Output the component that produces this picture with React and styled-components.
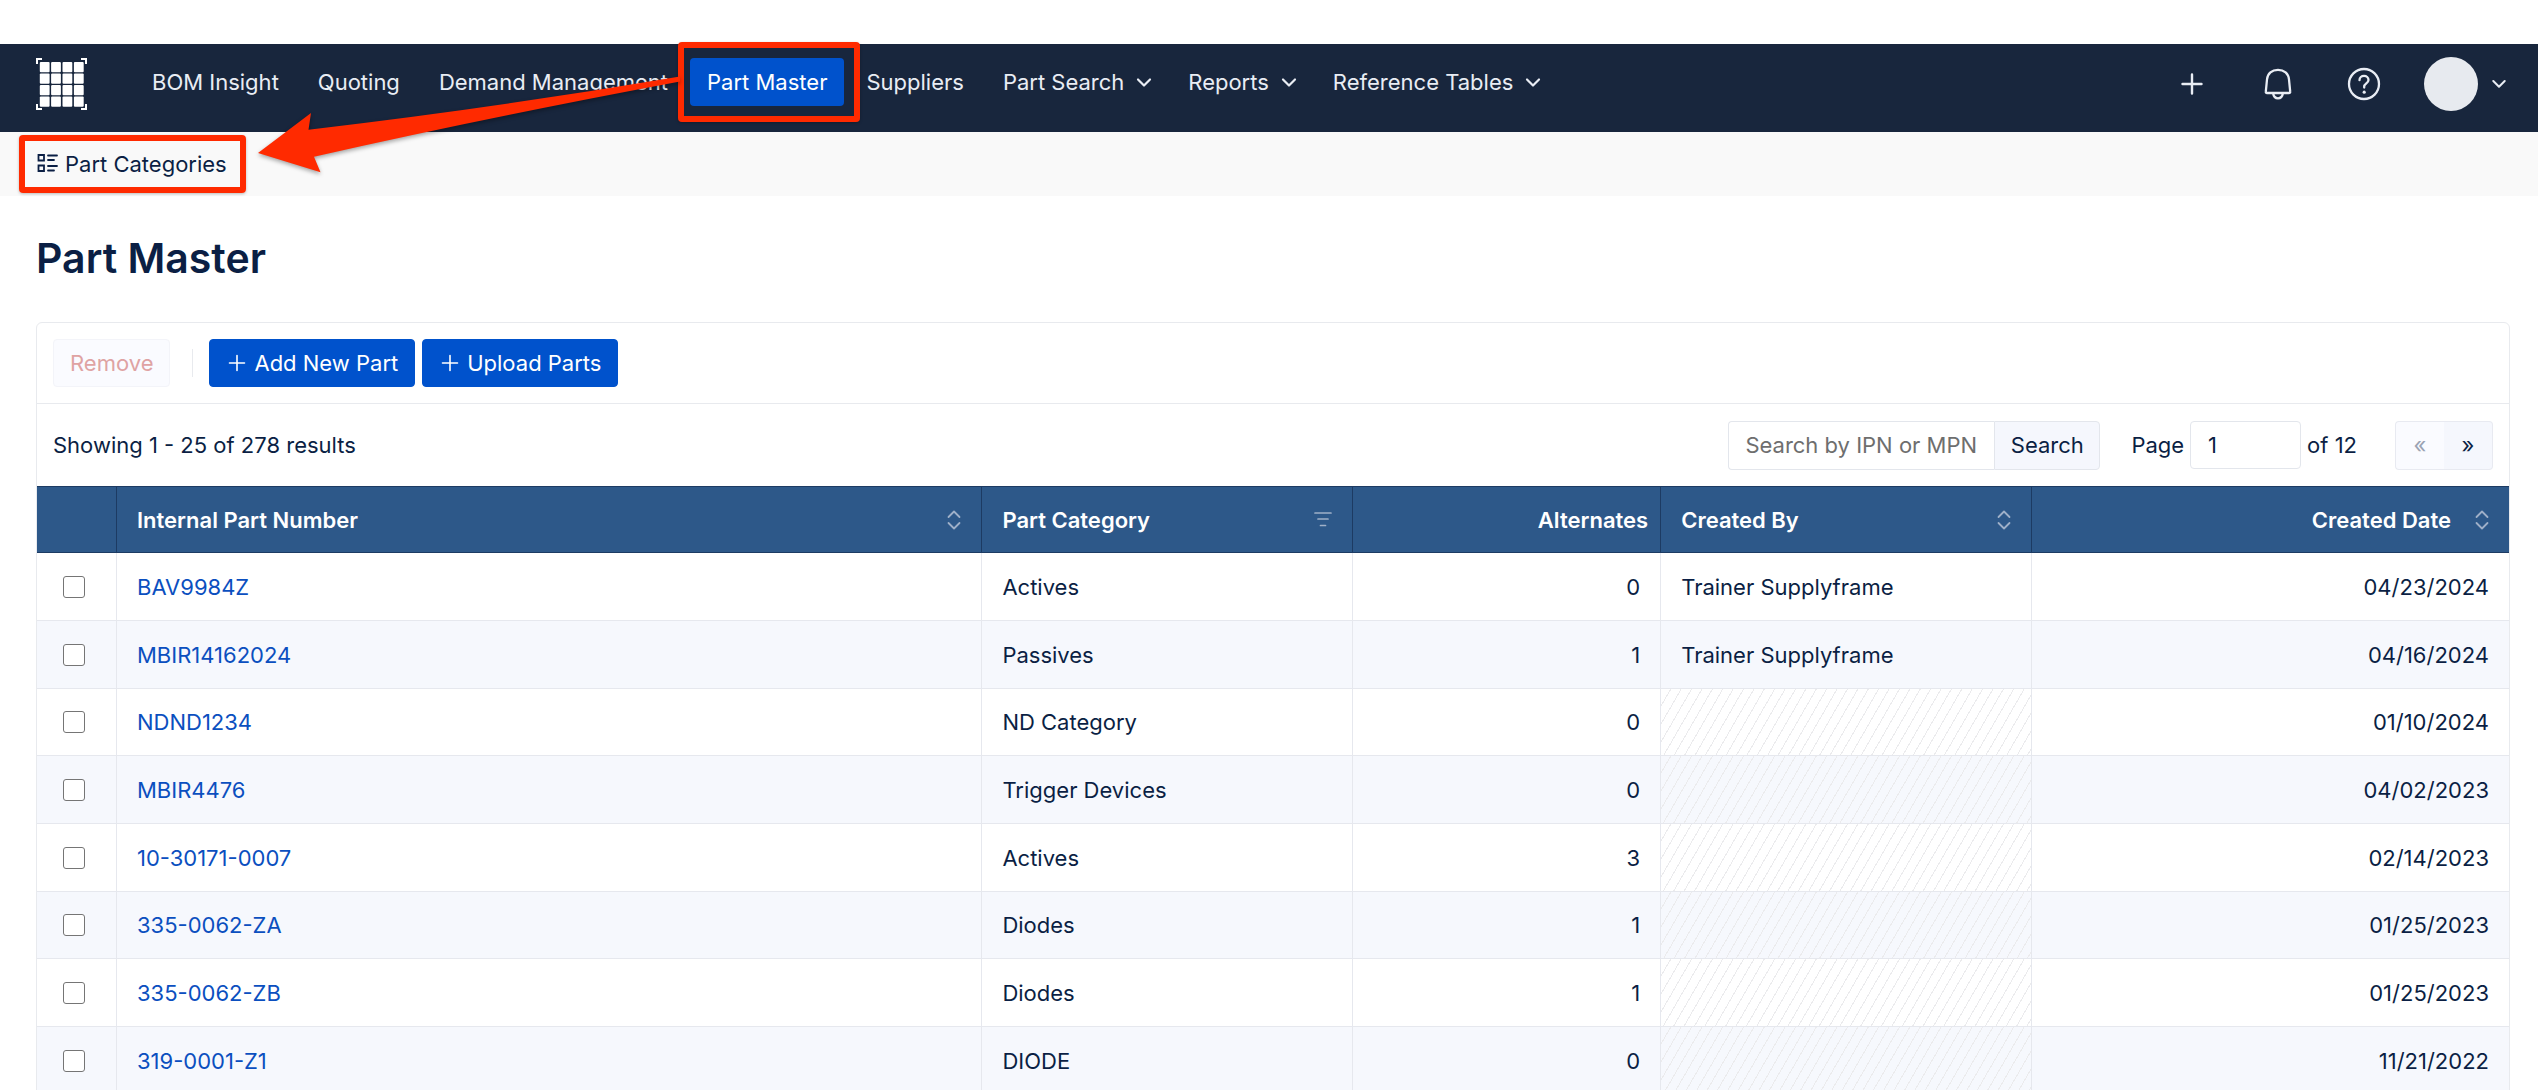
import React from 'react';
import styled, { createGlobalStyle, css } from 'styled-components';

const GlobalStyle = createGlobalStyle`
  *, *::before, *::after { box-sizing: border-box; }
  body {
    margin: 0;
    padding-top: 44px;
    background: #fff;
    color: #0b1f44;
    font: 400 22px/28px Inter, "Liberation Sans", sans-serif;
    overflow-x: hidden;
    scrollbar-width: none;
  }
  button, input { font: inherit; color: inherit; }
  a { color: inherit; text-decoration: none; }
`;

const RED = '#ff2a00';

const Page = styled.div`
  position: relative;
  display: flex;
  flex-direction: column;
`;

const TopBar = styled.header`
  display: flex;
  align-items: center;
  height: 88px;
  padding: 0 32px 8px 36px;
  background: #18263d;
  color: #e9edf4;
`;

const LogoLink = styled.a`
  display: flex;
  margin-right: 48px;
`;

const Nav = styled.nav`
  display: flex;
  align-items: flex-start;
  gap: 5px;
  height: 52px;
`;

const NavItem = styled.a`
  position: relative;
  display: flex;
  align-items: center;
  gap: 12px;
  height: 48px;
  padding: 0 ${(p) => (p.$menu ? '14px' : '17px')} 0 17px;
  border-radius: 4px;
  white-space: nowrap;
  ${(p) => p.$active && css`
    background: #0052cc;
    color: #fff;
  `}
`;

const Actions = styled.div`
  display: flex;
  align-items: center;
  margin-left: auto;
`;

const IconButton = styled.button`
  display: flex;
  align-items: center;
  justify-content: center;
  width: 86px;
  height: 54px;
  padding: 0;
  border: 0;
  background: none;
`;

const AccountButton = styled.button`
  display: flex;
  align-items: center;
  gap: 14px;
  margin-left: 17px;
  padding: 0;
  border: 0;
  background: none;
`;

const Avatar = styled.span`
  width: 54px;
  height: 54px;
  border-radius: 50%;
  background: #e7eaef;
`;

const SubBar = styled.nav`
  display: flex;
  align-items: center;
  height: 64px;
  padding: 0 37px;
  background: #f9f9f9;
`;

const SubLink = styled.a`
  position: relative;
  display: flex;
  align-items: center;
  gap: 7px;
`;

const Highlight = styled.span`
  position: absolute;
  inset: ${(p) => p.$inset};
  border: 6px solid ${RED};
  border-radius: 4px;
  box-shadow: 0 1px 3px rgba(0, 0, 0, 0.25);
  pointer-events: none;
`;

const Arrow = styled.svg`
  position: absolute;
  left: 250px;
  top: 0;
  filter: drop-shadow(0 2px 2px rgba(0, 0, 0, 0.35));
  pointer-events: none;
`;

const Main = styled.main`
  padding: 34px 28px 0 36px;
`;

const Title = styled.h1`
  margin: 0 0 36px;
  font-size: 41px;
  line-height: 56px;
  font-weight: 600;
`;

const Card = styled.section`
  border: 1px solid #e8eaee;
  border-radius: 6px;
`;

const Toolbar = styled.div`
  display: flex;
  align-items: center;
  height: 81px;
  padding: 0 16px;
  border-bottom: 1px solid #e8eaee;
`;

const Button = styled.button`
  display: flex;
  align-items: center;
  gap: 8px;
  height: 48px;
  padding: 0 16px;
  border: 1px solid #0052cc;
  border-radius: 4px;
  background: #0052cc;
  color: #fff;
  white-space: nowrap;
  & + & { margin-left: 7px; }
  &:disabled {
    border-color: #f3f4f9;
    background: #fafbff;
    color: #dfa3a3;
  }
`;

const Divider = styled.span`
  width: 1px;
  height: 28px;
  margin: 0 16px 0 22px;
  background: #e8eaee;
`;

const ResultsBar = styled.div`
  display: flex;
  align-items: center;
  height: 82px;
  padding: 0 16px;
`;

const Results = styled.p`
  margin: 0 auto 0 0;
`;

const SearchForm = styled.form`
  display: flex;
  height: 49px;
  margin-right: 31px;
`;

const SearchInput = styled.input`
  width: 266px;
  padding: 0 16px;
  border: 1px solid #e3e6ec;
  border-right: 0;
  border-radius: 4px 0 0 4px;
  background: #fff;
  &::placeholder { color: #6e6e6e; opacity: 1; }
`;

const SearchButton = styled.button`
  width: 106px;
  padding: 0;
  border: 1px solid #e3e6ec;
  border-radius: 0 4px 4px 0;
  background: #f5f7fd;
`;

const PageLabel = styled.label`
  display: flex;
  align-items: center;
  gap: 6px;
  margin-right: 38px;
`;

const PageInput = styled.input`
  width: 111px;
  height: 48px;
  padding: 0 17px;
  border: 1px solid #e3e6ec;
  border-radius: 4px;
  background: #fff;
`;

const Pager = styled.div`
  display: flex;
`;

const PagerButton = styled.button`
  width: 49px;
  height: 49px;
  padding: 0;
  border: 1px solid #e8eaf1;
  border-width: 1px 1px 1px 0;
  border-radius: 0 4px 4px 0;
  background: #f5f7fd;
  &:disabled {
    border-width: 1px 0 1px 1px;
    border-radius: 4px 0 0 4px;
    background: #fafbff;
    color: #9aa3b4;
  }
`;

const Table = styled.table`
  width: 100%;
  table-layout: fixed;
  border-collapse: separate;
  border-spacing: 0;
`;

const Col = styled.col`
  width: ${(p) => p.$width};
`;

const HeadCell = styled.th`
  height: 67px;
  padding: 0 12px 0 20px;
  background: #2d5889;
  border: 0 solid #1d3b63;
  border-width: 1px 1px 1px 0;
  color: #fff;
  font-weight: 600;
  text-align: left;
  &:last-child { border-right-width: 0; }
`;

const HeadContent = styled.div`
  display: flex;
  align-items: center;
  gap: 24px;
  justify-content: ${(p) => (p.$end ? 'flex-end' : 'space-between')};
  svg { margin-right: 8px; }
`;

const Cell = styled.td`
  height: 68px;
  padding: 0 20px;
  border: 0 solid #e6e8ee;
  border-width: 0 1px 1px 0;
  text-align: ${(p) => (p.$end ? 'right' : 'left')};
  &:last-child { border-right-width: 0; }
  ${(p) => p.$empty && css`
    background-image: repeating-linear-gradient(
      120deg,
      transparent 0 8px,
      #ebebed 8px 9px
    );
  `}
`;

const Row = styled.tr`
  background: #fff;
  &:nth-child(even) { background: #f6f8fd; }
  &:nth-child(3n) ${Cell} { height: 67px; }
`;

const PartLink = styled.a`
  color: #0b4fbf;
`;

const Checkbox = styled.input`
  appearance: none;
  display: block;
  width: 22px;
  height: 22px;
  margin: 0 0 0 6px;
  border: 1px solid #757575;
  border-radius: 3px;
  background: #fff;
`;

const Chevron = () => (
  <svg width="16" height="16" viewBox="0 0 16 16" fill="none" stroke="currentColor" strokeWidth="2.200" strokeLinecap="round" strokeLinejoin="round" aria-hidden="true">
    <path d="M2 5.500l6 6 6-6" />
  </svg>
);

const PlusIcon = () => (
  <svg width="20" height="18" viewBox="0 0 20 18" stroke="currentColor" strokeWidth="1.6" strokeLinecap="round" aria-hidden="true">
    <path d="M11 1.500v15M3.500 9h15" />
  </svg>
);

const SortIcon = () => (
  <svg width="14" height="20" viewBox="0 0 14 20" fill="none" stroke="#9fb0c8" strokeWidth="1.8" strokeLinecap="round" strokeLinejoin="round" aria-hidden="true">
    <path d="M1.500 7L7 1.500 12.500 7M1.500 13L7 18.500 12.500 13" />
  </svg>
);

const FilterIcon = () => (
  <svg width="18" height="20" viewBox="0 0 18 20" fill="none" stroke="#9fb0c8" strokeWidth="1.7" strokeLinecap="round" aria-hidden="true">
    <path d="M1 3h16M4 9h10M6.500 15.500h5" />
  </svg>
);

const Logo = () => (
  <svg width="51" height="52" viewBox="0 0 51 52" fill="#fff" aria-hidden="true">
    {[3.800, 15.100, 26.500, 37.900].map((x) =>
      [4, 15.500, 27.100, 38.600].map((y) => (
        <rect key={`${x}-${y}`} x={x} y={y} width="9.800" height="10.200" rx="1" />
      ))
    )}
    <path d="M1 6V1h5M45 1h5v5M1 46v5h5M45 51h5v-5" fill="none" stroke="#fff" strokeWidth="2" />
  </svg>
);

const NAV = [
  { label: 'BOM Insight' },
  { label: 'Quoting' },
  { label: 'Demand Management' },
  { label: 'Part Master', active: true },
  { label: 'Suppliers' },
  { label: 'Part Search', menu: true },
  { label: 'Reports', menu: true },
  { label: 'Reference Tables', menu: true },
];

const PARTS = [
  ['BAV9984Z', 'Actives', 0, 'Trainer Supplyframe', '04/23/2024'],
  ['MBIR14162024', 'Passives', 1, 'Trainer Supplyframe', '04/16/2024'],
  ['NDND1234', 'ND Category', 0, '', '01/10/2024'],
  ['MBIR4476', 'Trigger Devices', 0, '', '04/02/2023'],
  ['10-30171-0007', 'Actives', 3, '', '02/14/2023'],
  ['335-0062-ZA', 'Diodes', 1, '', '01/25/2023'],
  ['335-0062-ZB', 'Diodes', 1, '', '01/25/2023'],
  ['319-0001-Z1', 'DIODE', 0, '', '11/21/2022'],
];

export default function App() {
  return (
    <>
      <GlobalStyle />
      <Page>
        <TopBar>
          <LogoLink href="#" aria-label="Home"><Logo /></LogoLink>
          <Nav>
            {NAV.map(({ label, active, menu }) => (
              <NavItem key={label} href="#" $active={active} $menu={menu}>
                {label}
                {menu && <Chevron />}
                {active && <Highlight $inset="-16px -16px -16px -12px" />}
              </NavItem>
            ))}
          </Nav>
          <Actions>
            <IconButton aria-label="Add">
              <svg width="22" height="22" viewBox="0 0 22 22" stroke="#e9edf4" strokeWidth="2.400" strokeLinecap="round">
                <path d="M11 1.500v19M1.500 11h19" />
              </svg>
            </IconButton>
            <IconButton aria-label="Notifications">
              <svg width="28" height="32" viewBox="0 0 28 32" fill="none" stroke="#e9edf4" strokeWidth="2.300" strokeLinejoin="round">
                <path d="M3 25c-.8 0-1.300-.5-1.200-1.300L3 11.500C3.500 5.500 8 1.800 14 1.800s10.500 3.700 11 9.700l1.200 12.200c.1.800-.4 1.300-1.200 1.300z" />
                <path d="M9.200 25.500c.4 3 2.200 4.800 4.800 4.800s4.400-1.800 4.800-4.800" />
              </svg>
            </IconButton>
            <IconButton aria-label="Help">
              <svg width="34" height="34" viewBox="0 0 34 34" fill="none" stroke="#e9edf4" strokeWidth="2.300" strokeLinecap="round" strokeLinejoin="round">
                <circle cx="17" cy="17" r="15" />
                <path d="M12.500 13.200c0-2.600 2-4.300 4.500-4.300s4.500 1.700 4.500 4.100c0 3.200-4.300 3.400-4.300 6.500v1" />
                <circle cx="17.200" cy="25.200" r="1.600" fill="#e9edf4" stroke="none" />
              </svg>
            </IconButton>
            <AccountButton aria-label="Account">
              <Avatar />
              <svg width="14" height="10" viewBox="0 0 14 10" fill="none" stroke="#e9edf4" strokeWidth="2" strokeLinecap="round" strokeLinejoin="round">
                <path d="M1.300 2L7 7.700 12.700 2" />
              </svg>
            </AccountButton>
          </Actions>
        </TopBar>

        <SubBar>
          <SubLink href="#">
            <svg width="21" height="20" viewBox="0 0 21 20" fill="none" stroke="currentColor" strokeWidth="1.800" strokeLinecap="round" aria-hidden="true">
              <path d="M1.500 1h5.500v5.500h-5.500zM1.500 11.500h5.500v5.500h-5.500zM11 1.500h9M11 6h6M11 12h9M11 16.500h6" />
            </svg>
            Part Categories
            <Highlight $inset="-15px -19px -15px -18px" />
          </SubLink>
        </SubBar>

        <Arrow width="440" height="140" viewBox="250 44 440 140" aria-hidden="true">
          <path d="M258 153L311 113L308.500 129.700Q500 107 680 76.500V81.500Q485 118 314 156.700L320.500 172.300Z" fill={RED} />
        </Arrow>

        <Main>
          <Title>Part Master</Title>
          <Card>
            <Toolbar>
              <Button disabled>Remove</Button>
              <Divider />
              <Button><PlusIcon />Add New Part</Button>
              <Button><PlusIcon />Upload Parts</Button>
            </Toolbar>
            <ResultsBar>
              <Results>Showing 1 - 25 of 278 results</Results>
              <SearchForm onSubmit={(e) => e.preventDefault()}>
                <SearchInput aria-label="Search by IPN or MPN" placeholder="Search by IPN or MPN" />
                <SearchButton>Search</SearchButton>
              </SearchForm>
              <PageLabel>
                Page
                <PageInput defaultValue="1" />
                of 12
              </PageLabel>
              <Pager>
                <PagerButton disabled aria-label="Previous page">«</PagerButton>
                <PagerButton aria-label="Next page">»</PagerButton>
              </Pager>
            </ResultsBar>
            <Table>
              <colgroup>
                <Col $width="80px" />
                <Col />
                <Col $width="15%" />
                <Col $width="308px" />
                <Col $width="15%" />
                <Col $width="477px" />
              </colgroup>
              <thead>
                <tr>
                  <HeadCell />
                  <HeadCell><HeadContent>Internal Part Number<SortIcon /></HeadContent></HeadCell>
                  <HeadCell><HeadContent>Part Category<FilterIcon /></HeadContent></HeadCell>
                  <HeadCell><HeadContent $end>Alternates</HeadContent></HeadCell>
                  <HeadCell><HeadContent>Created By<SortIcon /></HeadContent></HeadCell>
                  <HeadCell><HeadContent $end>Created Date<SortIcon /></HeadContent></HeadCell>
                </tr>
              </thead>
              <tbody>
                {PARTS.map(([ipn, category, alternates, author, date]) => (
                  <Row key={ipn}>
                    <Cell><Checkbox type="checkbox" aria-label={`Select ${ipn}`} /></Cell>
                    <Cell><PartLink href="#">{ipn}</PartLink></Cell>
                    <Cell>{category}</Cell>
                    <Cell $end>{alternates}</Cell>
                    <Cell $empty={!author}>{author}</Cell>
                    <Cell $end>{date}</Cell>
                  </Row>
                ))}
              </tbody>
            </Table>
          </Card>
        </Main>
      </Page>
    </>
  );
}
